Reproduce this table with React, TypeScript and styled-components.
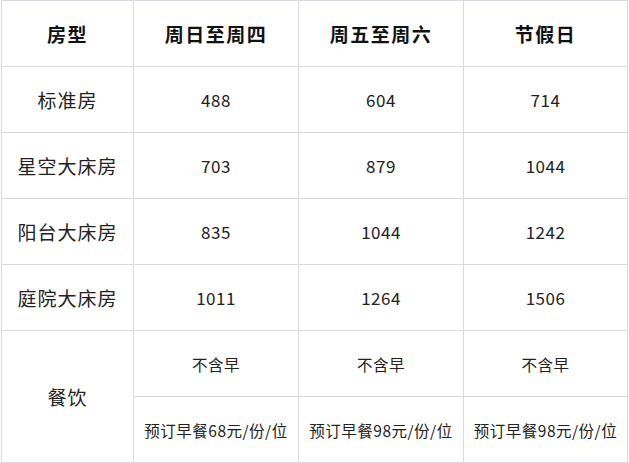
import React from "react";
import styled, { createGlobalStyle } from "styled-components";

const Global = createGlobalStyle`
  html, body { margin: 0; padding: 0; background: #ffffff; }
  body { font-family: "Noto Sans CJK SC", "Noto Sans", sans-serif; color: #1f1f1f; }
`;

const Page = styled.div`
  padding-left: 1px;
  width: 629px;
  height: 463px;
  box-sizing: border-box;
`;

const Grid = styled.div`
  display: grid;
  grid-template-columns: 131px 164px 164px 163px;
  grid-auto-rows: 65px;
  gap: 1px;
  padding: 1px;
  width: max-content;
  background: #d7dadf;
`;

const Cell = styled.div<{ $head?: boolean; $size?: number; $span?: number; $spacing?: number }>`
  background: #ffffff;
  display: flex;
  align-items: center;
  justify-content: center;
  white-space: nowrap;
  font-size: ${(p) => p.$size ?? 17}px;
  font-weight: ${(p) => (p.$head ? 700 : 400)};
  letter-spacing: ${(p) => (p.$spacing ?? (p.$head ? 1.5 : 0.5))}px;
  color: ${(p) => (p.$head ? "#111111" : "#222222")};
  grid-row: ${(p) => (p.$span ? `span ${p.$span}` : "auto")};
`;

const headers = ["房型", "周日至周四", "周五至周六", "节假日"];
const rows: [string, string, string, string][] = [
  ["标准房", "488", "604", "714"],
  ["星空大床房", "703", "879", "1044"],
  ["阳台大床房", "835", "1044", "1242"],
  ["庭院大床房", "1011", "1264", "1506"],
];

export default function App() {
  return (
    <>
      <Global />
      <Page>
        <Grid>
          {headers.map((h) => (
            <Cell key={h} $head $size={19}>
              {h}
            </Cell>
          ))}
          {rows.map((r) => (
            <React.Fragment key={r[0]}>
              <Cell $size={19} $spacing={1}>{r[0]}</Cell>
              <Cell>{r[1]}</Cell>
              <Cell>{r[2]}</Cell>
              <Cell>{r[3]}</Cell>
            </React.Fragment>
          ))}
          <Cell $size={19} $spacing={1} $span={2}>
            餐饮
          </Cell>
          <Cell $size={15.5}>不含早</Cell>
          <Cell $size={15.5}>不含早</Cell>
          <Cell $size={15.5}>不含早</Cell>
          <Cell $size={15.5}>预订早餐68元/份/位</Cell>
          <Cell $size={15.5}>预订早餐98元/份/位</Cell>
          <Cell $size={15.5}>预订早餐98元/份/位</Cell>
        </Grid>
      </Page>
    </>
  );
}
